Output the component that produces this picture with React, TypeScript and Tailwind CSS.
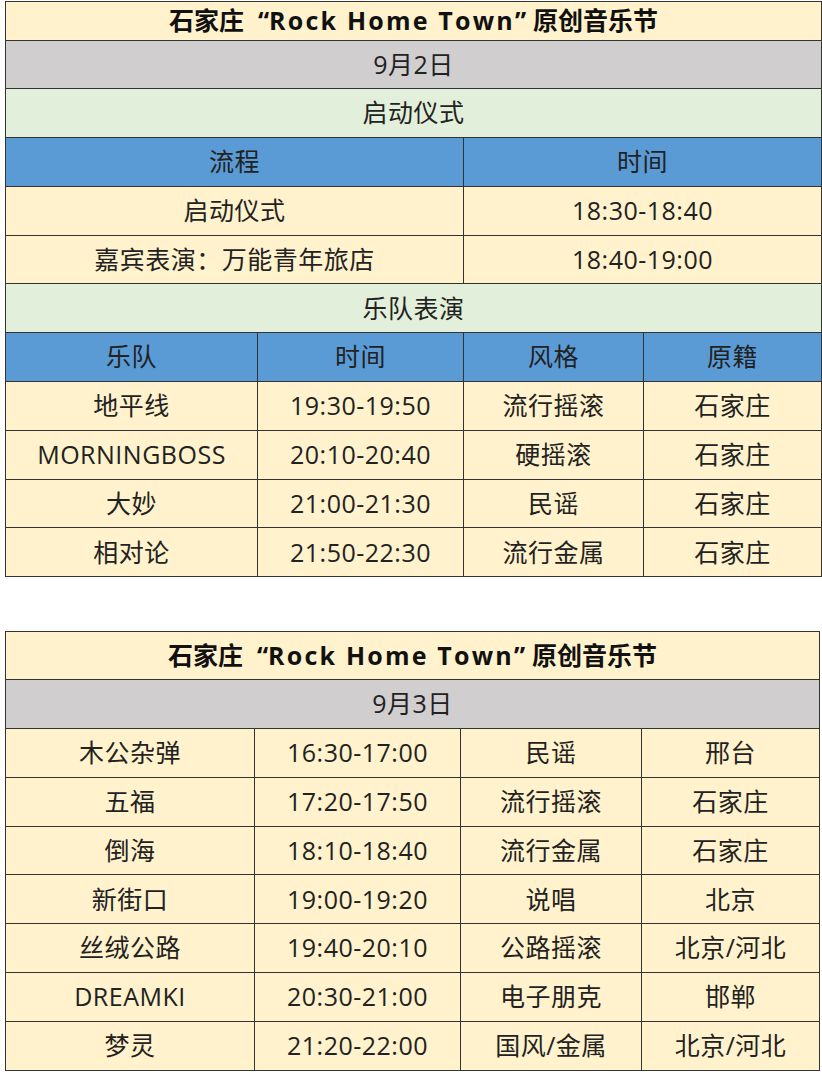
import React from "react";

const font = { fontFamily: '"Open Sans", "Noto Sans CJK SC", sans-serif' };

const cell = "border border-[#333] text-center align-middle p-0";

type Row = [string, string, string, string];

const day1Bands: Row[] = [
  ["地平线", "19:30-19:50", "流行摇滚", "石家庄"],
  ["MORNINGBOSS", "20:10-20:40", "硬摇滚", "石家庄"],
  ["大妙", "21:00-21:30", "民谣", "石家庄"],
  ["相对论", "21:50-22:30", "流行金属", "石家庄"],
];

const day2Bands: Row[] = [
  ["木公杂弹", "16:30-17:00", "民谣", "邢台"],
  ["五福", "17:20-17:50", "流行摇滚", "石家庄"],
  ["倒海", "18:10-18:40", "流行金属", "石家庄"],
  ["新街口", "19:00-19:20", "说唱", "北京"],
  ["丝绒公路", "19:40-20:10", "公路摇滚", "北京/河北"],
  ["DREAMKI", "20:30-21:00", "电子朋克", "邯郸"],
  ["梦灵", "21:20-22:00", "国风/金属", "北京/河北"],
];

const Title = ({ h }: { h: string }) => (
  <tr className={h}>
    <td colSpan={4} className={`${cell} bg-[#fff2cc] font-bold text-[25px] text-[#111] tracking-normal`}>
      <span>石家庄</span>
      <span className="inline-block w-[25px] text-right">“</span>
      <span className="tracking-[2.2px]">Rock Home Town</span>
      <span className="inline-block w-[18px] text-left">”</span>
      <span>原创音乐节</span>
    </td>
  </tr>
);

export default function App() {
  return (
    <div className="bg-white w-[822px] min-h-[1078px] text-[#222] text-[25px] tracking-[0.5px]" style={font}>
      <div className="pl-[5px] pt-[1px]">
        <table className="table-fixed border-collapse w-[816px]">
          <colgroup>
            <col className="w-[252px]" />
            <col className="w-[206px]" />
            <col className="w-[180px]" />
            <col className="w-[178px]" />
          </colgroup>
          <tbody>
            <Title h="h-[36px]" />
            <tr className="h-[48.8px]">
              <td colSpan={4} className={`${cell} bg-[#d0cece]`}>9月2日</td>
            </tr>
            <tr className="h-[48.8px]">
              <td colSpan={4} className={`${cell} bg-[#e2efda]`}>启动仪式</td>
            </tr>
            <tr className="h-[48.8px]">
              <td colSpan={2} className={`${cell} bg-[#5b9bd5]`}>流程</td>
              <td colSpan={2} className={`${cell} bg-[#5b9bd5]`}>时间</td>
            </tr>
            <tr className="h-[48.8px]">
              <td colSpan={2} className={`${cell} bg-[#fff2cc]`}>启动仪式</td>
              <td colSpan={2} className={`${cell} bg-[#fff2cc]`}>18:30-18:40</td>
            </tr>
            <tr className="h-[48.8px]">
              <td colSpan={2} className={`${cell} bg-[#fff2cc]`}>嘉宾表演：万能青年旅店</td>
              <td colSpan={2} className={`${cell} bg-[#fff2cc]`}>18:40-19:00</td>
            </tr>
            <tr className="h-[48.8px]">
              <td colSpan={4} className={`${cell} bg-[#e2efda]`}>乐队表演</td>
            </tr>
            <tr className="h-[48.8px]">
              {["乐队", "时间", "风格", "原籍"].map((t) => (
                <td key={t} className={`${cell} bg-[#5b9bd5]`}>{t}</td>
              ))}
            </tr>
            {day1Bands.map((r) => (
              <tr key={r[0]} className="h-[48.8px]">
                {r.map((t, i) => (
                  <td key={i} className={`${cell} bg-[#fff2cc]`}>{t}</td>
                ))}
              </tr>
            ))}
          </tbody>
        </table>
      </div>
      <div className="pl-[5px] pt-[54px]">
        <table className="table-fixed border-collapse w-[814px]">
          <colgroup>
            <col className="w-[249px]" />
            <col className="w-[206px]" />
            <col className="w-[181px]" />
            <col className="w-[178px]" />
          </colgroup>
          <tbody>
            <Title h="h-[48px]" />
            <tr className="h-[48.8px]">
              <td colSpan={4} className={`${cell} bg-[#d0cece]`}>9月3日</td>
            </tr>
            {day2Bands.map((r) => (
              <tr key={r[0]} className="h-[48.8px]">
                {r.map((t, i) => (
                  <td key={i} className={`${cell} bg-[#fff2cc]`}>{t}</td>
                ))}
              </tr>
            ))}
          </tbody>
        </table>
      </div>
    </div>
  );
}
